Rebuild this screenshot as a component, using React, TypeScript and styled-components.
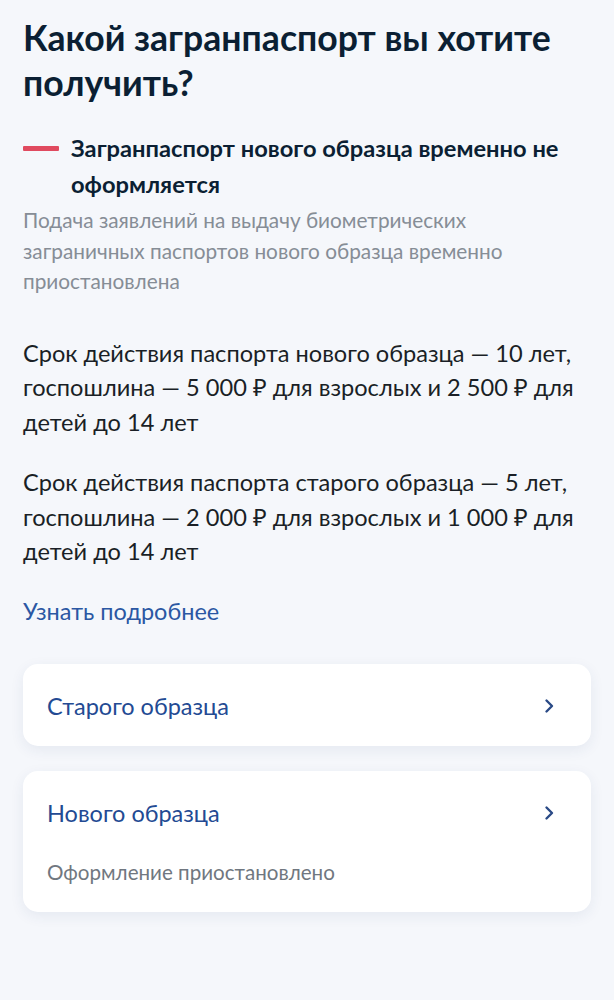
import React from 'react'
import styled, { createGlobalStyle } from 'styled-components'

const GlobalStyle = createGlobalStyle`
  html, body {
    margin: 0;
    padding: 0;
    background: #f5f7fb;
  }
  body {
    font-family: Lato, 'Noto Sans', sans-serif;
    color: #1c2531;
  }
`

const Page = styled.div`
  padding: 15px 23px 40px 23px;
  box-sizing: border-box;
  width: 614px;
`

const Title = styled.h1`
  margin: 0;
  font-size: 35.6px;
  line-height: 45px;
  font-weight: 700;
  color: #0b1f33;
`

const Notice = styled.div`
  margin-top: 25px;
  display: flex;
  align-items: flex-start;
`

const RedBar = styled.div`
  flex: none;
  width: 36px;
  height: 5px;
  border-radius: 1px;
  background: #e04a5f;
  margin-top: 16px;
  margin-right: 12px;
`

const NoticeTitle = styled.div`
  font-size: 23.7px;
  line-height: 36px;
  font-weight: 700;
  color: #0b1f33;
`

const NoticeText = styled.p`
  margin: 3px 0 0 0;
  max-width: 510px;
  font-size: 20.8px;
  line-height: 30.5px;
  color: #868d96;
`

const Paragraph = styled.p`
  margin: 0;
  font-size: 23.6px;
  line-height: 34.5px;
  color: #1a1f26;
`

const Paragraphs = styled.div`
  margin-top: 39px;
  display: flex;
  flex-direction: column;
  gap: 26px;
`

const MoreLink = styled.a`
  display: block;
  margin-top: 27px;
  font-size: 23.5px;
  line-height: 30px;
  color: #2b57a3;
  text-decoration: none;
`

const Cards = styled.div`
  margin-top: 38px;
  display: flex;
  flex-direction: column;
  gap: 25px;
`

const Card = styled.div<{ $tall?: boolean }>`
  background: #fff;
  border-radius: 15px;
  box-shadow: 0 4px 14px rgba(40, 60, 110, 0.08);
  padding: ${p => (p.$tall ? '27px 32px 28px 24px' : '27px 32px 25px 24px')};
`

const CardHead = styled.div`
  display: flex;
  align-items: center;
  justify-content: space-between;
`

const CardTitle = styled.div`
  font-size: 23.5px;
  line-height: 30px;
  color: #234a93;
`

const CardNote = styled.div`
  margin-top: 32px;
  font-size: 20.6px;
  line-height: 24px;
  color: #707780;
`

const Chevron = () => (
  <svg width="20" height="20" viewBox="0 0 20 20" fill="none">
    <path d="M7.5 4.5l5.5 5.5-5.5 5.5" stroke="#2a4a86" strokeWidth="2.4" strokeLinecap="round" strokeLinejoin="round" />
  </svg>
)

const App: React.FC = () => (
  <>
    <GlobalStyle />
    <Page>
      <Title>Какой загранпаспорт вы хотите получить?</Title>
      <Notice>
        <RedBar />
        <NoticeTitle>Загранпаспорт нового образца временно не оформляется</NoticeTitle>
      </Notice>
      <NoticeText>
        Подача заявлений на выдачу биометрических заграничных паспортов нового образца временно
        приостановлена
      </NoticeText>
      <Paragraphs>
        <Paragraph>
          Срок действия паспорта нового образца — 10 лет, госпошлина — 5 000 ₽ для взрослых и
          2 500 ₽ для детей до 14 лет
        </Paragraph>
        <Paragraph>
          Срок действия паспорта старого образца — 5 лет, госпошлина — 2 000 ₽ для взрослых и
          1 000 ₽ для детей до 14 лет
        </Paragraph>
      </Paragraphs>
      <MoreLink href="#">Узнать подробнее</MoreLink>
      <Cards>
        <Card>
          <CardHead>
            <CardTitle>Старого образца</CardTitle>
            <Chevron />
          </CardHead>
        </Card>
        <Card $tall>
          <CardHead>
            <CardTitle>Нового образца</CardTitle>
            <Chevron />
          </CardHead>
          <CardNote>Оформление приостановлено</CardNote>
        </Card>
      </Cards>
    </Page>
  </>
)

export default App
